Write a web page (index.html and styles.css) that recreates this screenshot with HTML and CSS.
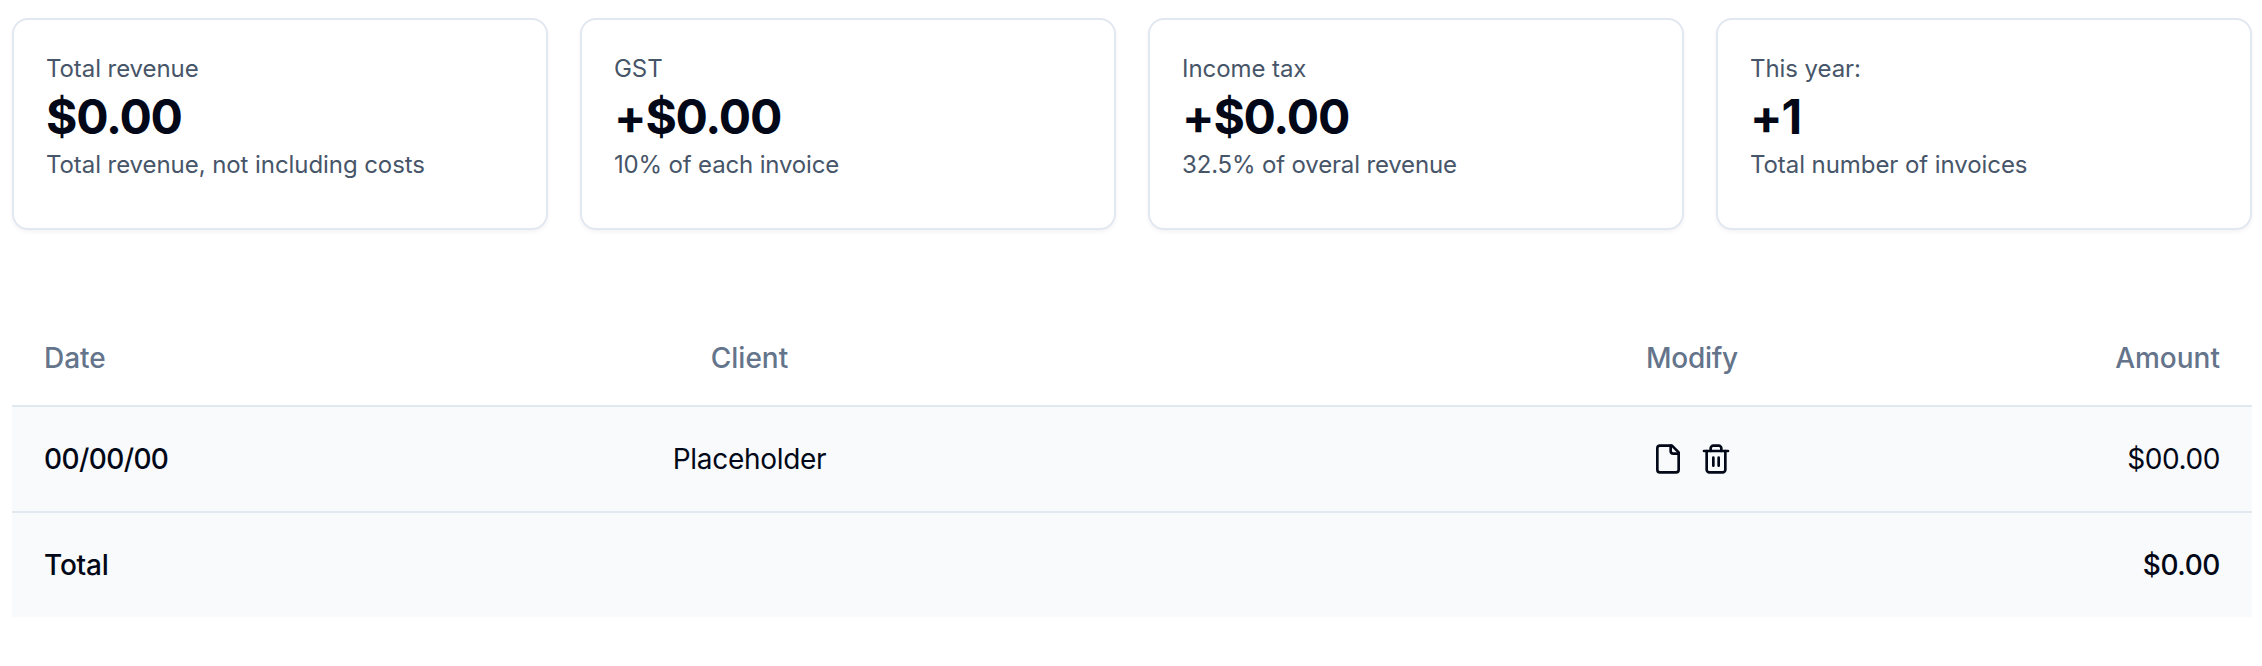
FILE: index.html
```html
<!DOCTYPE html>
<html lang="en">
<head>
<meta charset="utf-8">
<title>Invoices</title>
<link rel="stylesheet" href="styles.css">
</head>
<body>
<main class="page">
  <section class="stats">
    <article class="card">
      <p class="label">Total revenue</p>
      <p class="value">$0.00</p>
      <p class="label">Total revenue, not including costs</p>
    </article>
    <article class="card">
      <p class="label">GST</p>
      <p class="value">+$0.00</p>
      <p class="label rate">10% of each invoice</p>
    </article>
    <article class="card">
      <p class="label">Income tax</p>
      <p class="value">+$0.00</p>
      <p class="label rate">32.5% of overal revenue</p>
    </article>
    <article class="card">
      <p class="label">This year:</p>
      <p class="value">+1</p>
      <p class="label">Total number of invoices</p>
    </article>
  </section>
  <table class="invoices">
    <colgroup>
      <col class="col-date"><col class="col-client"><col class="col-modify"><col class="col-amount">
    </colgroup>
    <thead>
      <tr>
        <th>Date</th>
        <th class="center">Client</th>
        <th class="center modify">Modify</th>
        <th class="right">Amount</th>
      </tr>
    </thead>
    <tbody>
      <tr>
        <td class="strong date">00/00/00</td>
        <td class="center client">Placeholder</td>
        <td>
          <div class="actions">
            <svg class="icon" viewBox="0 0 24 24"><path d="M15 2H6a2 2 0 0 0-2 2v16a2 2 0 0 0 2 2h12a2 2 0 0 0 2-2V7Z"/><path d="M14 2v4a2 2 0 0 0 2 2h4"/></svg>
            <svg class="icon" viewBox="0 0 24 24"><path d="M3 6h18"/><path d="M19 6v14c0 1-1 2-2 2H7c-1 0-2-1-2-2V6"/><path d="M8 6V4c0-1 1-2 2-2h4c1 0 2 1 2 2v2"/><path d="M10 11v6"/><path d="M14 11v6"/></svg>
          </div>
        </td>
        <td class="right money">$00.00</td>
      </tr>
    </tbody>
    <tfoot>
      <tr>
        <td class="strong total" colspan="3">Total</td>
        <td class="strong right money">$0.00</td>
      </tr>
    </tfoot>
  </table>
</main>
</body>
</html>
```
FILE: styles.css
```css
* {
  box-sizing: border-box;
}

body {
  margin: 0;
  background: #fff;
  color: #020817;
  font-family: Inter, "Liberation Sans", sans-serif;
}

.page {
  padding: 18px 10px 0 12px;
}

.stats {
  display: grid;
  grid-template-columns: repeat(4, 1fr);
  gap: 32px;
  margin-bottom: 80px;
}

.card {
  height: 212px;
  padding: 33px 32px 31px;
  border: 2px solid #e2e8f0;
  border-radius: 16px;
  box-shadow: 0 2px 4px rgba(0, 0, 0, 0.05);
}

.label,
.value {
  margin: 0;
}

.label {
  color: #475569;
  font-size: 24px;
  line-height: 32px;
  letter-spacing: -0.07px;
}

.rate {
  letter-spacing: -0.16px;
}

.value {
  font-size: 48px;
  font-weight: 700;
  line-height: 64px;
  letter-spacing: -0.025em;
}

.invoices {
  width: 100%;
  table-layout: fixed;
  border-collapse: separate;
  border-spacing: 0;
  font-size: 28px;
  line-height: 40px;
}

.col-date { width: 188px; }
.col-client { width: 1099px; }
.col-modify { width: 786px; }
.col-amount { width: 167px; }

th,
td {
  padding: 0 32px;
  text-align: left;
  white-space: nowrap;
}

th {
  height: 97px;
  border-bottom: 2px solid #e2e8f0;
  color: #64748b;
  font-weight: 500;
}

td {
  height: 104px;
  background: #f8fafc;
}

tbody td {
  height: 106px;
  border-bottom: 2px solid #e2e8f0;
}

.center { text-align: center; }
.right { padding-left: 0; text-align: right; }
.strong { font-weight: 500; }
.date { letter-spacing: -0.6px; }
.client { letter-spacing: -0.3px; }
.modify { letter-spacing: -0.3px; }
.money { letter-spacing: -0.4px; }
.total { letter-spacing: -0.2px; }

.actions {
  display: flex;
  justify-content: center;
  gap: 16px;
}

.icon {
  width: 32px;
  height: 32px;
  fill: none;
  stroke: currentColor;
  stroke-width: 2;
  stroke-linecap: round;
  stroke-linejoin: round;
}
```
